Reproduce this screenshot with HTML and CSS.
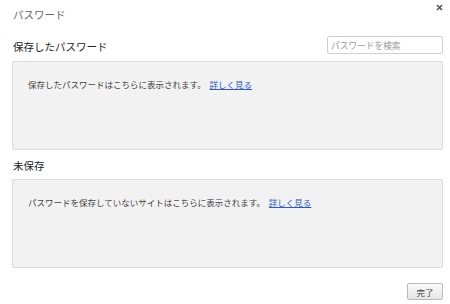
FILE: index.html
```html
<!DOCTYPE html>
<html lang="ja">
<head>
    <meta charset="UTF-8">
    <title>パスワード</title>
    <link rel="stylesheet" href="styles.css">
</head>
<body>

    <div class="dialog">
        <div class="dialog-head">
            <h1 class="dialog-title">パスワード</h1>
            <button class="close-btn" aria-label="閉じる">
                <svg width="7" height="7" viewBox="0 0 7 7">
                    <path d="M1 1 L6 6 M6 1 L1 6" stroke="#555" stroke-width="1.6"/>
                </svg>
            </button>
        </div>

        <div class="section-head">
            <h2>保存したパスワード</h2>
            <input class="search" type="text" placeholder="パスワードを検索">
        </div>
        <div class="list-box">
            <p>保存したパスワードはこちらに表示されます。 <a href="#">詳しく見る</a></p>
        </div>

        <div class="section-head second">
            <h2>未保存</h2>
        </div>
        <div class="list-box">
            <p>パスワードを保存していないサイトはこちらに表示されます。 <a href="#">詳しく見る</a></p>
        </div>

        <div class="dialog-foot">
            <button class="done-btn">完了</button>
        </div>
    </div>

</body>
</html>
```

FILE: styles.css
```css
body {
    margin: 0;
    padding: 0;
    background: #fff;
    font-family: "Noto Sans CJK JP", "Noto Sans", sans-serif;
    color: #333;
}

.dialog {
    padding: 0 7px 0 12px;
}

.dialog-head {
    display: flex;
    justify-content: space-between;
    align-items: flex-start;
}

.dialog-title {
    margin: 8px 0 0 1px;
    font-size: 10.5px;
    line-height: 14px;
    font-weight: normal;
    color: #666;
}

.close-btn {
    background: none;
    border: none;
    padding: 0;
    margin: 4px 0 0 0;
    width: 7px;
    height: 7px;
    display: flex;
}

.section-head {
    display: flex;
    justify-content: space-between;
    align-items: flex-end;
    margin: 14px 0 7px 0;
}

.section-head.second {
    margin: 9px 0 6px 0;
}

.section-head h2 {
    margin: 0 0 0 1px;
    font-size: 10.5px;
    line-height: 14px;
    font-weight: normal;
    color: #222;
}

.search {
    box-sizing: border-box;
    width: 116px;
    height: 18px;
    margin: 0;
    padding: 0 3px;
    border: 1px solid #cfcfcf;
    border-radius: 2px;
    font-family: inherit;
    font-size: 8.7px;
    color: #333;
}

.search::placeholder {
    color: #999;
}

.list-box {
    box-sizing: border-box;
    height: 89px;
    background: #f2f2f2;
    border: 1px solid #dcdcdc;
    border-radius: 2px;
    padding: 15px 15px;
}

.list-box p {
    margin: 0;
    font-size: 8.5px;
    line-height: 14px;
    color: #444;
}

.list-box a {
    color: #2a5bd7;
    text-decoration: underline;
    margin-left: 2px;
}

.dialog-foot {
    display: flex;
    justify-content: flex-end;
    margin-top: 15px;
}

.done-btn {
    box-sizing: border-box;
    width: 36px;
    height: 17px;
    padding: 0;
    border: 1px solid #bbb;
    border-radius: 2px;
    background: linear-gradient(#fafafa, #e6e6e6);
    font-family: inherit;
    font-size: 8.5px;
    color: #444;
}
```
